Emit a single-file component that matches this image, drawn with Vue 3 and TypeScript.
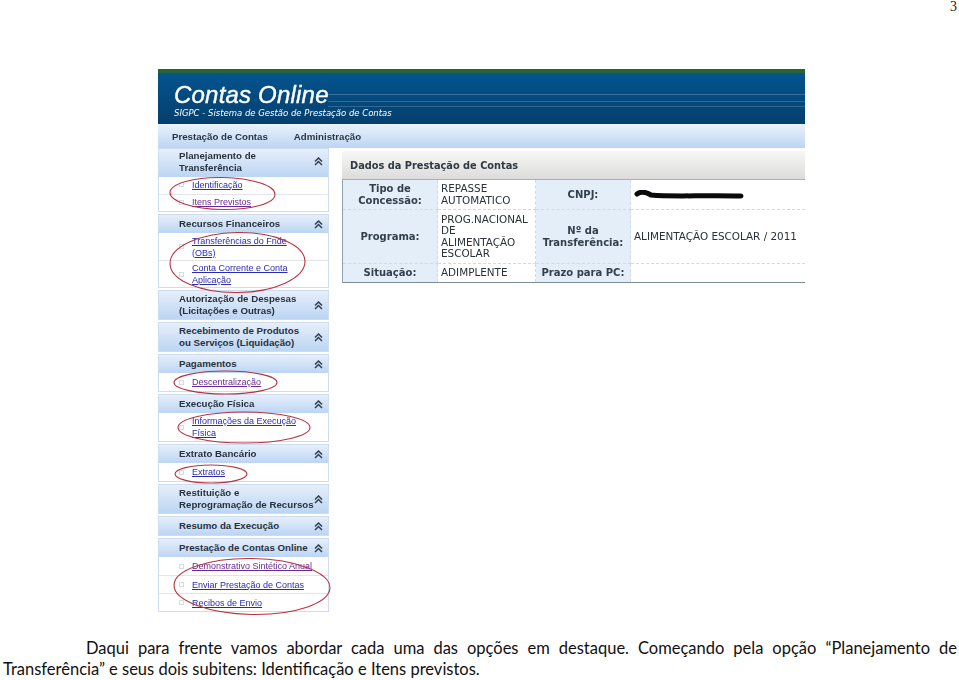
<script setup lang="ts">
interface MenuItem {
  label: string
  visited?: boolean
}

interface MenuPanel {
  title: string
  tall?: boolean
  compact?: boolean
  items: MenuItem[]
}

const panels: MenuPanel[] = [
  {
    title: 'Planejamento de\nTransferência',
    tall: true,
    compact: true,
    items: [{ label: 'Identificação' }, { label: 'Itens Previstos', visited: true }],
  },
  {
    title: 'Recursos Financeiros',
    compact: true,
    items: [{ label: 'Transferências do Fnde\n(OBs)' }, { label: 'Conta Corrente e Conta\nAplicação' }],
  },
  { title: 'Autorização de Despesas\n(Licitações e Outras)', tall: true, items: [] },
  { title: 'Recebimento de Produtos\nou Serviços (Liquidação)', tall: true, items: [] },
  { title: 'Pagamentos', items: [{ label: 'Descentralização', visited: true }] },
  { title: 'Execução Física', items: [{ label: 'Informações da Execução\nFísica' }] },
  { title: 'Extrato Bancário', items: [{ label: 'Extratos' }] },
  { title: 'Restituição e\nReprogramação de Recursos', tall: true, items: [] },
  { title: 'Resumo da Execução', items: [] },
  {
    title: 'Prestação de Contas Online',
    items: [
      { label: 'Demonstrativo Sintético Anual', visited: true },
      { label: 'Enviar Prestação de Contas' },
      { label: 'Recibos de Envio' },
    ],
  },
]

const circles = [
  { cx: 222.5, cy: 193.5, rx: 52.5, ry: 16, r: 1 },
  { cx: 237.5, cy: 262.5, rx: 67.5, ry: 30, r: -1 },
  { cx: 225.5, cy: 382.5, rx: 51.5, ry: 11.5, r: 0 },
  { cx: 244, cy: 427.5, rx: 66, ry: 15.5, r: 0 },
  { cx: 211, cy: 474, rx: 36, ry: 9, r: 0 },
  { cx: 252, cy: 586.5, rx: 78, ry: 28, r: 1 },
]
</script>

<template>
  <div class="page">
    <div class="page-number">3</div>

    <div class="shot">
      <div class="soft">
        <header class="banner">
          <div class="banner__title">Contas Online</div>
          <div class="banner__sub">SIGPC - Sistema de Gestão de Prestação de Contas</div>
        </header>
        <nav class="topnav">
          <span>Prestação de Contas</span>
          <span>Administração</span>
        </nav>

        <div class="body">
          <aside class="side">
            <section
              v-for="p in panels"
              :key="p.title"
              class="panel"
              :class="{ 'panel--compact': p.compact }"
            >
              <header class="panel__head" :class="{ 'panel__head--tall': p.tall }">
                <span class="panel__title">{{ p.title }}</span>
                <svg class="panel__chev" width="9" height="9" viewBox="0 0 9 9">
                  <path d="M1 4.5 4.5 1 8 4.5M1 8 4.5 4.5 8 8" fill="none" stroke="#33404f" stroke-width="1.5" />
                </svg>
              </header>
              <div
                v-for="i in p.items"
                :key="i.label"
                class="item"
                :class="{ 'item--two': i.label.includes('\n') }"
              >
                <span class="item__dot"></span>
                <a class="item__link" :class="{ 'item__link--visited': i.visited }">{{ i.label }}</a>
              </div>
            </section>
          </aside>

          <main class="main">
            <div class="main__title">Dados da Prestação de Contas</div>
            <table class="data">
              <colgroup>
                <col class="col-a" />
                <col class="col-b" />
                <col class="col-c" />
                <col />
              </colgroup>
              <tbody>
                <tr class="row-a">
                  <th>Tipo de<br />Concessão:</th>
                  <td>REPASSE<br />AUTOMATICO</td>
                  <th>CNPJ:</th>
                  <td>
                    <svg class="scribble" width="110" height="10" viewBox="0 0 110 10">
                      <path d="M3 4C7 1 12 2 17 5 38 7 70 5 107 6" fill="none" stroke="#0a0a0a" stroke-width="5" stroke-linecap="round" />
                    </svg>
                  </td>
                </tr>
                <tr class="row-b">
                  <th>Programa:</th>
                  <td>PROG.NACIONAL<br />DE<br />ALIMENTAÇÃO<br />ESCOLAR</td>
                  <th>Nº da<br />Transferência:</th>
                  <td>ALIMENTAÇÃO ESCOLAR / 2011</td>
                </tr>
                <tr class="row-c">
                  <th>Situação:</th>
                  <td>ADIMPLENTE</td>
                  <th>Prazo para PC:</th>
                  <td></td>
                </tr>
              </tbody>
            </table>
          </main>
        </div>
      </div>

      <svg class="marks" viewBox="158 69 647 558" width="647" height="558">
        <ellipse
          v-for="c in circles"
          :key="c.cx"
          :cx="c.cx"
          :cy="c.cy"
          :rx="c.rx"
          :ry="c.ry"
          :transform="`rotate(${c.r} ${c.cx} ${c.cy})`"
          fill="none"
          stroke="#b8333f"
          stroke-width="1.1"
        />
      </svg>
    </div>

    <div class="caption">
      <p class="caption__first">Daqui para frente vamos abordar cada uma das opções em destaque. Começando pela opção “Planejamento de</p>
      <p>Transferência” e seus dois subitens: Identificação e Itens previstos.</p>
    </div>
  </div>
</template>

<style scoped>
.page {
  width: 959px;
  height: 680px;
  overflow: hidden;
  background: #fff;
}

.page-number {
  height: 69px;
  padding-right: 2px;
  text-align: right;
  font: 14px/13px "Liberation Serif", serif;
  color: #222;
}

.shot {
  position: relative;
  width: 647px;
  height: 558px;
  margin-left: 158px;
  font-family: "Liberation Sans", Arial, sans-serif;
}

.soft {
  filter: blur(0.35px);
}

.banner {
  height: 55px;
  box-sizing: border-box;
  padding: 10px 0 0 16px;
  border-top: 4px solid #2b6434;
  color: #fff;
  background:
    linear-gradient(transparent 21px, rgba(255, 255, 255, 0.2) 21px 22px, transparent 22px 28px, rgba(255, 255, 255, 0.18) 28px 29px, transparent 29px 33px, rgba(255, 255, 255, 0.18) 33px 34px, transparent 34px) right top / 477px 100% no-repeat,
    linear-gradient(#04548e, #053f6e);
}

.banner__title {
  font: italic 24px/24px "Liberation Sans", sans-serif;
  letter-spacing: 0.2px;
  -webkit-text-stroke: 0.4px #fff;
}

.banner__sub {
  margin-top: 1px;
  font: italic 8.5px/10px "DejaVu Sans", sans-serif;
  white-space: nowrap;
}

.topnav {
  display: flex;
  gap: 26px;
  height: 24px;
  align-items: center;
  padding-left: 14px;
  font-size: 9.7px;
  font-weight: 700;
  color: #2a3644;
  background: linear-gradient(#eaf2fc, #bcd5f3);
}

.body {
  display: flex;
  gap: 13px;
}

.side {
  display: flex;
  flex-direction: column;
  gap: 2px;
  width: 171px;
}

.panel {
  border: 1px solid #cddcee;
  background: #fff;
}

.panel__head {
  display: flex;
  align-items: center;
  justify-content: space-between;
  box-sizing: border-box;
  height: 18px;
  padding: 0 5px 0 20px;
  font-size: 9.7px;
  line-height: 12px;
  font-weight: 700;
  color: #28323e;
  background: linear-gradient(#e6effb, #bcd5f3);
}

.panel__head--tall {
  height: 28px;
}

.panel--compact .panel__head--tall {
  padding-bottom: 3px;
}

.panel__title {
  white-space: pre;
}

.panel__chev {
  flex: none;
}

.item {
  display: flex;
  align-items: center;
  gap: 8px;
  box-sizing: border-box;
  min-height: 18px;
  padding: 0 6px 0 20px;
  border-top: 1px solid #e1e5ea;
  font-size: 9px;
  line-height: 12px;
}

.item--two {
  min-height: 28px;
}

.item:first-of-type {
  border-top: 0;
}

.panel--compact .item {
  min-height: 17px;
  padding-bottom: 2px;
}

.panel--compact .item--two {
  min-height: 27px;
  padding-bottom: 0;
}

.item__dot {
  flex: none;
  width: 3px;
  height: 3px;
  border: 1px solid #d5dce4;
}

.item__link {
  white-space: pre;
  text-decoration: underline;
  color: #2b2bb0;
}

.item__link--visited {
  color: #6a2a95;
}

.main {
  flex: 1;
  margin-top: 3px;
  min-width: 0;
}

.main__title {
  display: flex;
  align-items: center;
  height: 28px;
  padding-left: 8px;
  border-radius: 3px 0 0 0;
  font: 700 9.8px "DejaVu Sans", sans-serif;
  color: #2d3a45;
  background: linear-gradient(#f7f7f5, #dcdcda);
}

.data {
  width: 100%;
  table-layout: fixed;
  border-collapse: collapse;
  border-bottom: 1px solid #7d8b96;
  font-size: 10px;
  line-height: 11.5px;
  color: #2a3138;
}

.col-a {
  width: 95px;
}

.col-b {
  width: 98px;
}

.col-c {
  width: 95px;
}

.data th,
.data td {
  padding: 0 3px;
  border: 1px dashed #d3d9de;
}

.data th:first-child {
  border-left: 1px solid #8ea0ae;
}

.data td:last-child {
  border-right: 0;
}

.data tr:last-child th,
.data tr:last-child td {
  border-bottom: 0;
}

.data tr:first-child th,
.data tr:first-child td {
  border-top: 1px solid #9fb0bf;
}

.data th {
  font: 700 10px/12px "DejaVu Sans", sans-serif;
  color: #33404c;
  text-align: center;
  background: #e3eef8;
}

.data td {
  font-family: "DejaVu Sans", sans-serif;
  font-size: 10.4px;
  white-space: nowrap;
}

.row-a {
  height: 30px;
}

.row-b {
  height: 54px;
}

.row-c {
  height: 19px;
}

.scribble {
  display: block;
}

.marks {
  position: absolute;
  left: 0;
  top: 0;
  pointer-events: none;
}

.caption {
  padding: 11px 2px 0 3px;
  font: 16.5px/21px Lato, sans-serif;
  color: #111;
}

.caption p {
  margin: 0;
  white-space: nowrap;
}

.caption .caption__first {
  padding-left: 83px;
  white-space: normal;
  text-align: justify;
  text-align-last: justify;
}
</style>

<style>
html,
body {
  background: #fff;
}
</style>
